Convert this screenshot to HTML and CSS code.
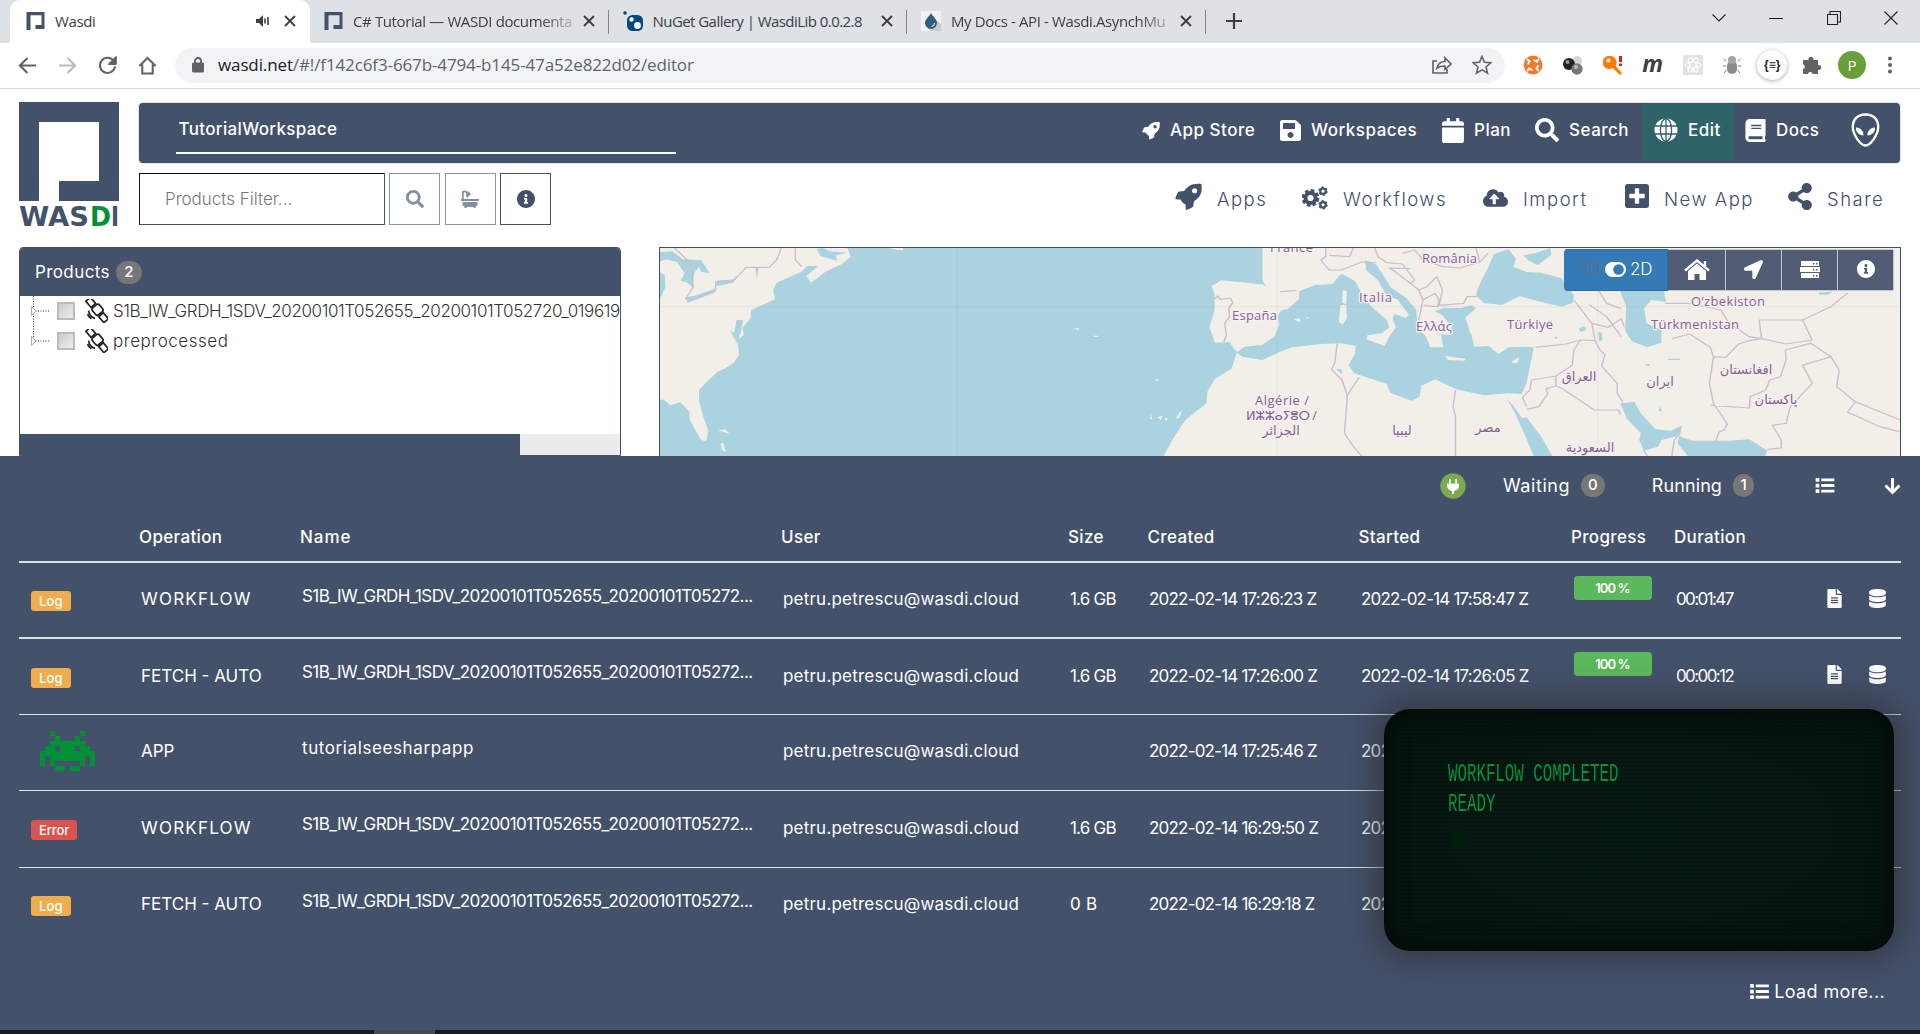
FILE: index.html
```html
<!DOCTYPE html>
<html lang="en">
<head>
<meta charset="utf-8">
<title>Wasdi</title>
<link rel="stylesheet" href="styles.css">
</head>
<body>
<svg class="defs" width="0" height="0">
  <defs>
    <symbol id="search" viewBox="0 0 512 512"><path d="M505 442.700L405.300 343c-4.500-4.500-10.600-7-17-7H372c27.600-35.300 44-79.700 44-128C416 93.100 322.900 0 208 0S0 93.100 0 208s93.100 208 208 208c48.300 0 92.700-16.400 128-44v16.300c0 6.400 2.500 12.500 7 17l99.700 99.700c9.400 9.400 24.600 9.400 33.900 0l28.300-28.300c9.400-9.400 9.400-24.600.1-34zM208 336c-70.700 0-128-57.200-128-128 0-70.700 57.200-128 128-128 70.700 0 128 57.200 128 128 0 70.700-57.200 128-128 128z"/></symbol>
    <symbol id="save" viewBox="0 32 448 448"><path d="M433.941 129.941l-83.882-83.882A48 48 0 0 0 316.118 32H48C21.490 32 0 53.490 0 80v352c0 26.510 21.490 48 48 48h352c26.510 0 48-21.490 48-48V163.882a48 48 0 0 0-14.059-33.941zM224 416c-35.346 0-64-28.654-64-64 0-35.346 28.654-64 64-64s64 28.654 64 64c0 35.346-28.654 64-64 64zm96-304.520V212c0 6.627-5.373 12-12 12H76c-6.627 0-12-5.373-12-12V108c0-6.627 5.373-12 12-12h228.520c3.183 0 6.235 1.264 8.485 3.515l3.480 3.480A11.996 11.996 0 0 1 320 111.480z"/></symbol>
    <symbol id="calendar" viewBox="0 0 448 512"><path d="M12 192h424c6.600 0 12 5.400 12 12v260c0 26.500-21.500 48-48 48H48c-26.500 0-48-21.500-48-48V204c0-6.600 5.400-12 12-12zm436-44v-36c0-26.500-21.500-48-48-48h-48V12c0-6.600-5.400-12-12-12h-40c-6.600 0-12 5.400-12 12v52H160V12c0-6.600-5.400-12-12-12h-40c-6.600 0-12 5.400-12 12v52H48C21.500 64 0 85.500 0 112v36c0 6.600 5.400 12 12 12h424c6.600 0 12-5.400 12-12z"/></symbol>
    <symbol id="book" viewBox="0 0 448 512"><path d="M448 360V24c0-13.300-10.700-24-24-24H96C43 0 0 43 0 96v320c0 53 43 96 96 96h328c13.300 0 24-10.700 24-24v-16c0-7.500-3.500-14.300-8.900-18.700-4.200-15.400-4.200-59.300 0-74.700 5.400-4.300 8.900-11.100 8.900-18.600zM128 134c0-3.300 2.700-6 6-6h212c3.300 0 6 2.700 6 6v20c0 3.300-2.700 6-6 6H134c-3.300 0-6-2.700-6-6v-20zm0 64c0-3.300 2.700-6 6-6h212c3.300 0 6 2.700 6 6v20c0 3.300-2.700 6-6 6H134c-3.300 0-6-2.700-6-6v-20zm253.400 250H96c-17.700 0-32-14.300-32-32 0-17.600 14.400-32 32-32h285.400c-1.900 17.100-1.900 46.900 0 64z"/></symbol>
    <symbol id="share" viewBox="0 0 448 512"><path d="M352 320c-22.608 0-43.387 7.819-59.790 20.895l-102.486-64.054a96.551 96.551 0 0 0 0-41.683l102.486-64.054C308.613 184.181 329.392 192 352 192c53.019 0 96-42.981 96-96S405.019 0 352 0s-96 42.981-96 96c0 7.158.79 14.130 2.276 20.841L155.790 180.895C139.387 167.819 118.608 160 96 160c-53.019 0-96 42.981-96 96s42.981 96 96 96c22.608 0 43.387-7.819 59.790-20.895l102.486 64.054A96.301 96.301 0 0 0 256 416c0 53.019 42.981 96 96 96s96-42.981 96-96-42.981-96-96-96z"/></symbol>
    <symbol id="plus" viewBox="0 32 448 448"><path d="M400 32H48C21.500 32 0 53.500 0 80v352c0 26.500 21.500 48 48 48h352c26.500 0 48-21.500 48-48V80c0-26.500-21.500-48-48-48zm-32 252c0 6.600-5.400 12-12 12h-92v92c0 6.600-5.400 12-12 12h-56c-6.600 0-12-5.400-12-12v-92H92c-6.600 0-12-5.400-12-12v-56c0-6.600 5.400-12 12-12h92v-92c0-6.600 5.400-12 12-12h56c6.600 0 12 5.400 12 12v92h92c6.600 0 12 5.400 12 12v56z"/></symbol>
    <symbol id="upload" viewBox="0 32 640 448"><path d="M537.600 226.600c4.100-10.700 6.400-22.400 6.400-34.600 0-53-43-96-96-96-19.700 0-38.100 6-53.300 16.200C367 64.200 315.300 32 256 32c-88.400 0-160 71.600-160 160 0 2.700.1 5.400.2 8.100C40.200 219.800 0 273.200 0 336c0 79.500 64.500 144 144 144h368c70.700 0 128-57.300 128-128 0-61.900-44-113.600-102.400-125.400zM393.400 288H328v112c0 8.800-7.200 16-16 16h-48c-8.800 0-16-7.200-16-16V288h-65.400c-14.300 0-21.400-17.200-11.300-27.300l105.400-105.400c6.200-6.200 16.400-6.200 22.600 0l105.400 105.400c10.100 10.100 2.900 27.300-11.300 27.300z"/></symbol>
    <symbol id="info" viewBox="8 8 496 496"><path d="M256 8C119.043 8 8 119.083 8 256c0 136.997 111.043 248 248 248s248-111.003 248-248C504 119.083 392.957 8 256 8zm0 110c23.196 0 42 18.804 42 42s-18.804 42-42 42-42-18.804-42-42 18.804-42 42-42zm56 254c0 6.627-5.373 12-12 12h-88c-6.627 0-12-5.373-12-12v-24c0-6.627 5.373-12 12-12h12v-64h-12c-6.627 0-12-5.373-12-12v-24c0-6.627 5.373-12 12-12h64c6.627 0 12 5.373 12 12v100h12c6.627 0 12 5.373 12 12v24z"/></symbol>
    <symbol id="arrow" viewBox="0 0 512 512"><path d="M444.520 3.520L28.740 195.420c-47.970 22.390-31.980 92.750 19.190 92.750h175.910v175.910c0 51.170 70.360 67.170 92.750 19.190l191.900-415.780c15.990-38.390-25.590-79.970-63.970-63.970z"/></symbol>
    <symbol id="database" viewBox="0 0 448 512"><path d="M448 73.143v45.714C448 159.143 347.667 192 224 192S0 159.143 0 118.857V73.143C0 32.857 100.333 0 224 0s224 32.857 224 73.143zM448 176v102.857C448 319.143 347.667 352 224 352S0 319.143 0 278.857V176c48.125 33.143 136.208 48.572 224 48.572S399.874 209.143 448 176zm0 160v102.857C448 479.143 347.667 512 224 512S0 479.143 0 438.857V336c48.125 33.143 136.208 48.572 224 48.572S399.874 369.143 448 336z"/></symbol>
    <symbol id="file" viewBox="0 0 384 512"><path d="M224 136V0H24C10.700 0 0 10.700 0 24v464c0 13.300 10.700 24 24 24h336c13.300 0 24-10.700 24-24V160H248c-13.200 0-24-10.800-24-24zm64 248H96v-32h192zm0-64H96v-32h192zm0-64H96v-32h192zM384 122v6H256V0h6c7 0 13 3 17 7l98 98c5 5 7 10 7 17z"/></symbol>
    <symbol id="rocket" viewBox="0 0 24 24"><path fill-rule="evenodd" d="M23.500.8C15 0 11.500 2.600 8.200 7L3.500 7.600C2.500 7.800.2 13.500.4 14.200c.2.500 4.700.5 4.700.5.300 1.700 2.500 4 4.400 4.500 0 0-.2 4.500.4 4.700.8.200 6-2 6.300-3.200l.7-4.500C22.500 12.500 24.500 9 23.500.8zM17.400 4.600a2.300 2.300 0 1 1 0 4.600 2.300 2.300 0 0 1 0-4.600z"/></symbol>
    <symbol id="globe" viewBox="0 0 24 24"><circle cx="12" cy="12" r="11.500"/><g class="cut"><ellipse cx="12" cy="12" rx="5.600" ry="11.500"/><path d="M12 .5v23M1 8h22M1 16h22"/></g></symbol>
    <symbol id="gears" viewBox="0 0 26 24"><g fill="none" stroke="currentColor"><circle cx="8.500" cy="12" r="5.100" stroke-width="4"/><circle cx="8.500" cy="12" r="7.600" stroke-width="2.600" stroke-dasharray="3.700 2.270"/><circle cx="21" cy="5.200" r="2.700" stroke-width="2.200"/><circle cx="21" cy="5.200" r="4" stroke-width="1.400" stroke-dasharray="2.200 2"/><circle cx="21" cy="18.800" r="2.700" stroke-width="2.200"/><circle cx="21" cy="18.800" r="4" stroke-width="1.400" stroke-dasharray="2.200 2"/></g></symbol>
    <symbol id="list" viewBox="0 0 20 16"><path d="M0 0h4v4H0zM0 6h4v4H0zM0 12h4v4H0zM6 .5h14v3H6zM6 6.500h14v3H6zM6 12.500h14v3H6z"/></symbol>
    <symbol id="mark" viewBox="0 0 18 18"><path fill="#44516b" d="M0 0h18v17h-9v-4h6V3.200H4V18H0z"/></symbol>
    <symbol id="x" viewBox="0 0 12 12"><path d="M1 1l10 10M11 1L1 11" fill="none" stroke="#3c4043" stroke-width="1.900"/></symbol>
    <symbol id="sat" viewBox="0 0 24 24"><g fill="#fff" stroke="#222" stroke-width="1.700" transform="rotate(50 12 12)"><rect x="-2" y="7.500" width="8" height="6"/><rect x="18" y="7.500" width="8" height="6"/><rect x="7.500" y="5.500" width="9" height="9" rx="2"/><path d="M6 10.500h1.500M16.500 10.500H18M7 17.500c3 2 7 2 10 0M9 20.500c2 1 4 1 6 0"/></g></symbol>
  </defs>
</svg>

<header class="browser">
  <div class="tabs">
    <div class="tab active"><svg class="fav"><use href="#mark"/></svg><span class="tab-title">Wasdi</span>
      <svg class="sound" width="14" height="12" viewBox="0 0 14 12"><path fill="#3c4043" d="M0 4h3l4-4v12L3 8H0z"/><path d="M9 3.500v5M12 2v8" stroke="#3c4043" stroke-width="1.600"/></svg>
      <svg class="close"><use href="#x"/></svg></div>
    <div class="tab"><svg class="fav"><use href="#mark"/></svg><span class="tab-title fade">C# Tutorial — WASDI documenta</span><svg class="close"><use href="#x"/></svg></div>
    <div class="tab"><svg class="fav" viewBox="0 0 20 20"><circle cx="2" cy="2" r="1.800" fill="#004880"/><rect x="4" y="4" width="16" height="16" rx="5.500" fill="#004880"/><circle cx="8.500" cy="8.500" r="2.200" fill="#fff"/><circle cx="14.500" cy="14.500" r="3.400" fill="#fff"/></svg><span class="tab-title nuget">NuGet Gallery | WasdiLib 0.0.2.8</span><svg class="close"><use href="#x"/></svg></div>
    <div class="tab"><svg class="fav" viewBox="0 0 20 20"><path fill="#f1f1f1" d="M0 0h20v20H0z"/><path fill="#c9c9c9" d="M15 9l5 4v7H10l-4-4z"/><path fill="#355a7d" d="M10 2c2 4 6 6 6 10a6 6 0 0 1-12 0c0-4 4-6 6-10z"/><path d="M13.500 12a3.500 3.500 0 0 1-3 3.500" fill="none" stroke="#fff"/></svg><span class="tab-title fade">My Docs - API - Wasdi.AsynchMu</span><svg class="close"><use href="#x"/></svg></div>
    <svg class="newtab" viewBox="0 0 16 16"><path d="M8 0v16M0 8h16" stroke="#3c4043" stroke-width="2.200"/></svg>
    <div class="winbtns">
      <svg viewBox="0 0 14 14"><path d="M.5 3.500L7 10l6.500-6.500"/></svg>
      <svg viewBox="0 0 14 14"><path d="M0 7.500h14"/></svg>
      <svg viewBox="0 0 14 14"><path d="M.5 3.500h10v10H.5zM3 3.500v-3h10.500v10.500h-3"/></svg>
      <svg viewBox="0 0 14 14"><path d="M.5.5l13 13M13.500.5l-13 13"/></svg>
    </div>
  </div>
  <div class="toolbar">
    <svg class="nav-ico" viewBox="0 0 20 20"><path d="M19 10H2M10 2l-8 8 8 8"/></svg>
    <svg class="nav-ico off" viewBox="0 0 20 20"><path d="M1 10h17M10 2l8 8-8 8"/></svg>
    <svg class="nav-ico" viewBox="0 0 20 20"><path d="M16.500 5A8 8 0 1 0 18 11M18.500 1v7h-7"/><path d="M18.500 2v6h-6z" fill="#5f6368"/></svg>
    <svg class="nav-ico" viewBox="0 0 20 20"><path d="M1.500 10.500L10 2l8.500 8.500M4.500 9v9.500h11V9"/></svg>
    <div class="omnibox">
      <svg width="12" height="16" viewBox="0 0 12 16"><rect y="5.500" width="12" height="10" rx="1.500" fill="#5f6368"/><path d="M3 6V4a3 3 0 0 1 6 0v2" fill="none" stroke="#5f6368" stroke-width="1.800"/></svg>
      <span class="url"><b>wasdi.net</b>/#!/f142c6f3-667b-4794-b145-47a52e822d02/editor</span>
      <svg class="share-ico" viewBox="0 0 20 20"><path d="M5 6H1v12h14v-4M5 13c1-4 3-6.500 8-6.500V3l6 6-6 5.500V11c-4 0-6 .5-8 2z"/></svg>
      <svg class="star-ico" viewBox="0 0 20 20"><path d="M10 1.500l2.500 5.800 6.300.5-4.800 4.200 1.500 6.200L10 14.900l-5.500 3.300L6 12 1.200 7.800l6.300-.5z"/></svg>
    </div>
    <div class="exts">
      <svg viewBox="0 0 20 20"><circle cx="10" cy="10" r="9.500" fill="#f47b2a"/><circle cx="10" cy="10" r="5" fill="none" stroke="#fff" stroke-width="1.800" stroke-dasharray="4.500 3.350"/><path d="M4 4l3 3M16 4l-3 3M4 16l3-3M16 16l-3-3" stroke="#fff" stroke-width="1.800"/></svg>
      <svg viewBox="0 0 20 20"><circle cx="14" cy="6" r="5" fill="#d6d6d6"/><circle cx="6" cy="9" r="6" fill="#222"/><circle cx="4.500" cy="7" r="2" fill="#999"/><circle cx="14" cy="14" r="5.700" fill="#777"/><circle cx="13" cy="12" r="2" fill="#bbb"/></svg>
      <svg viewBox="0 0 20 20"><path fill="#ff7a00" fill-rule="evenodd" d="M7 1a6.500 6.500 0 1 0 2.500 12L17 20l2-2-6.500-7A6.500 6.500 0 0 0 7 1zM5.500 3.500a2 2 0 1 1 0 4 2 2 0 0 1 0-4z"/><path fill="#d3202f" d="M16 1h3v6h-3zM16 8.500h3v2.500h-3z"/></svg>
      <span class="ext-m">m</span>
      <svg viewBox="0 0 20 20"><rect width="20" height="20" rx="1" fill="#e2e2e2"/><g fill="none" stroke="#fff"><ellipse cx="10" cy="10" rx="8" ry="3"/><ellipse cx="10" cy="10" rx="8" ry="3" transform="rotate(60 10 10)"/><ellipse cx="10" cy="10" rx="8" ry="3" transform="rotate(120 10 10)"/></g></svg>
      <svg viewBox="0 0 20 20"><path d="M4 6L1.500 4M4 11H1M4.500 15L2 18M16 6l2.500-2M16 11h3M15.500 15l2.500 3" stroke="#777" fill="none"/><rect x="5" y="6" width="10" height="13" rx="5" fill="#8a8a8a"/><circle cx="10" cy="5" r="4" fill="#a5a5a5"/></svg>
      <span class="ext-json">{≡}</span>
      <svg viewBox="0 0 20 20"><path fill="#5f6368" d="M1 5h5.500a2.500 2.500 0 1 1 4.800 0H16v5.200a2.500 2.500 0 1 1 0 4.800v4h-5.200a2.600 2.600 0 0 0-5 0H1v-4.700a2.600 2.600 0 0 0 0-5z"/></svg>
      <span class="avatar">P</span>
      <svg viewBox="0 0 20 20"><g fill="#5f6368"><circle cx="8" cy="3.500" r="2"/><circle cx="8" cy="10" r="2"/><circle cx="8" cy="16.500" r="2"/></g></svg>
    </div>
  </div>
</header>

<main class="page">
  <div class="top">
    <svg class="logo" viewBox="0 0 100 124">
      <path fill="#44516b" fill-rule="evenodd" d="M0 0h100v99H40V79h40V20H20v79H0z"/>
      <g class="word"><text x="0" y="123.500" textLength="70" lengthAdjust="spacingAndGlyphs" fill="#44516b">WAS</text><text x="71" y="123.500" textLength="21" lengthAdjust="spacingAndGlyphs" fill="#009036">D</text><text x="92" y="123.500" textLength="8" lengthAdjust="spacingAndGlyphs" fill="#44516b">I</text></g>
    </svg>
    <div class="heads">
      <div class="bar">
        <div class="workspace">TutorialWorkspace</div>
        <nav class="mainnav">
          <a><svg class="i18"><use href="#rocket"/></svg>App Store</a>
          <a><svg class="i21"><use href="#save"/></svg>Workspaces</a>
          <a><svg class="i22"><use href="#calendar"/></svg>Plan</a>
          <a><svg class="i24"><use href="#search"/></svg>Search</a>
          <a class="pad on"><svg class="i24"><use href="#globe"/></svg>Edit</a>
          <a class="pad"><svg class="i21"><use href="#book"/></svg>Docs</a>
          <a><svg width="29" height="34" viewBox="0 0 28 34"><path d="M14 1.500C6 1.500 1.300 6.500 1.300 14c0 7.500 7.700 18.500 12.700 18.500S26.700 21.500 26.700 14C26.700 6.500 22 1.500 14 1.500z" fill="none" stroke="#fff" stroke-width="2.400"/><path fill="#fff" d="M4.500 14.500c4-.5 8 3.500 7.500 8-4.500 0-8-4-7.500-8zM23.500 14.500c-4-.5-8 3.500-7.500 8 4.500 0 8-4 7.500-8z"/></svg></a>
        </nav>
      </div>
      <div class="tools">
        <div class="filter">Products Filter...</div>
        <span class="btn"><svg width="18" height="18"><use href="#search"/></svg></span>
        <span class="btn"><svg width="18" height="18" viewBox="0 0 18 18"><path d="M0 9h18v2H0zM1.500 12h15v3l-2 2v1h-2v-1h-7v1h-2v-1l-2-2zM1 9V2.500C1 0 5 0 6 2l1-1 3 3-4 4-1-3 .2-2c-.7-1-2.500-1-2.500.5V9z"/></svg></span>
        <span class="btn strong"><svg width="18" height="18"><use href="#info"/></svg></span>
        <nav class="subnav">
          <a><svg width="27" height="27"><use href="#rocket"/></svg>Apps</a>
          <a><svg class="gears" width="26" height="24"><use href="#gears"/></svg>Workflows</a>
          <a><svg class="cloud" width="25" height="18"><use href="#upload"/></svg>Import</a>
          <a><svg width="24" height="24"><use href="#plus"/></svg>New App</a>
          <a><svg width="24" height="27"><use href="#share"/></svg>Share</a>
        </nav>
      </div>
    </div>
  </div>

  <div class="work">
    <section class="products">
      <div class="phead">Products<span class="badge">2</span></div>
      <div class="tree">
        <div class="node"><svg class="branch" viewBox="0 0 20 30"><path class="dots" d="M2.500 0v30M2 15h17"/><path class="tri" d="M.5 10.500L5 15 .5 19.500z"/></svg><i class="chk"></i><svg class="sat"><use href="#sat"/></svg><span class="long">S1B_IW_GRDH_1SDV_20200101T052655_20200101T052720_019619</span></div>
        <div class="node"><svg class="branch" viewBox="0 0 20 30"><path class="dots" d="M2.500 0v15M2 15h17"/><path class="tri" d="M.5 10.500L5 15 .5 19.500z"/></svg><i class="chk"></i><svg class="sat"><use href="#sat"/></svg><span class="pre">preprocessed</span></div>
      </div>
      <div class="scroll"><div class="thumb"></div></div>
    </section>
    <section class="map">
      <svg class="geo" viewBox="660 248 1240 208" preserveAspectRatio="none">
        <g transform="translate(650 240) scale(.40816 .33333)">
          <g class="land">
            <path d="M22 0H490L483 22 492 50 470 72 430 95 395 128 383 108 412 78 385 78 371 95 335 115 310 128 302 150 306 178 285 190 248 210 246 235 226 265 230 285 214 300 218 345 205 368 185 385 165 395 140 425 120 450 120 482 130 528 143 572 138 604 125 600 107 562 97 538 96 515 75 487 50 496 35 480 22 478z"/>
            <path d="M1568 165L1640 130 1700 100 1568 0H1500L1522 60 1518 110 1505 134 1460 128 1400 121 1376 138 1384 165 1383 210 1371 262 1384 308 1420 306 1430 325 1440 336 1455 320 1500 315 1530 290 1541 255 1538 225 1555 195z"/>
            <path d="M585 24h35v6h-12zM172 612l8-4 6 28-8-4zM165 572l20-4 10 14-20-8zM1226 520l5 18h-5zM1244 532l12-6-4 14zM1260 534l8 0-2 10zM1288 535l12-22 4-2-8 24zM1036 266l14-2 2 6zM1086 287h12v4h-10zM1238 418h8v4h-8z"/>
          </g>
          <g class="sea">
            <path d="M22 36L55 34 80 58 125 60 147 100 125 95 120 80 108 100 105 142 92 128 75 122 85 100 66 66 40 58 22 66zM22 96L36 104 38 140 22 184zM86 172L108 168 160 146 158 158 110 180 92 188zM160 134L168 122 205 118 213 100 204 128 166 138zM258 82h8l-4 36zM408 26L418 48 458 62 455 46 484 38 440 34 425 24zM228 240l-6 40-10 30-8-40 6 35-14-35 10 10 6-40z"/>
          </g>
          <path class="border" d="M60 24L100 70 106 140 88 176 105 180 160 152 162 124 205 122 236 82H292L310 60 322 24M356 24V60L372 80M1384 176L1392 168 1397 178 1422 174 1428 188 1418 205 1420 230 1408 250 1412 285 1406 306M1505 134L1540 152 1556 150 1570 165M1501 360L1512 400 1518 428 1500 436 1478 448 1472 466 1440 490 1386 516V588H1330V648M1386 552L1340 564 1330 586 1295 635V648M1386 552L1498 648M1425 648V610H1450"/>
          <g transform="translate(1543.500 0)">
            <g class="land">
              <path d="M-43 0H1530V650H-286L-260 592-232 540-180 490-178 455-160 418-118 385-106 338-92 350-43 360 0 335 30 322 100 312 150 310 186 318 184 340 168 375 182 400 262 432 270 458 322 482 342 470 346 438 380 418 432 448 500 466 560 460 592 462 604 430 622 322 600 320 560 322 535 342 512 318 476 320 468 280 450 262 452 235 480 205 470 196 440 205 400 212 398 225 420 262 418 285 394 282 400 322 368 322 358 290 338 262 334 210 310 175 270 140 250 100 236 74 208 60 212 92 238 118 262 168 288 178 316 225 308 234 280 222 276 236 284 262 270 285 256 318 212 298 214 286 250 280 268 262 262 240 224 200 202 164 184 124 150 100 128 132 105 134 62 136 48 140 46 178 20 206 0 212-43 120z"/>
              <path d="M148 196l14-2 2 40-10 20-10-8zM154 150l10 4-2 38-10-4zM404 348l50 8-2 6-40-2zM570 362l16-10-4 16-14 2zM35 238l12-4 4 8-6 4zM62 232h8v6z"/>
            </g>
            <g class="sea">
              <path d="M480 165L490 130 508 88 524 42 560 28 578 56 572 80 604 96 640 98 690 115 720 165 718 188 690 200 640 186 588 168 545 194 500 190zM596 46L625 40 662 24 665 44 632 76 610 62zM826 130L940 152 946 185 910 180 892 205 898 250 935 270 934 308 900 322 862 304 846 272 848 200zM556 476L574 500 592 534 604 532 640 590 668 650H622L598 580 576 520zM834 490L868 486 884 520 920 568 958 572 985 556 980 586 935 600 926 620 892 632 880 600 884 580 850 536zM978 588L1010 602 1100 602 1150 598 1194 632 1188 650H1000L974 610z"/>
              <path d="M380 214l20-10 70 0-16 28 8 30 8 50-20-12-10-50-26-24-16 0zM732 266l14-8 4 12-14 6zM780 276l8 2 2 22-8 4zM896 372h10v6h-10zM950 356h30v4h-30zM930 498l6 16h-8zM1320 158l34-4-10 10h-22zM136 388h16v14zM672 290h8l-4 8z"/>
            </g>
            <path class="border" d="M0 155L40 152M112 24V50L100 60 120 90 150 90 200 66 236 68M232 24L240 50 262 68 300 72 330 120 320 130 276 90 268 84 320 86M300 40L330 30 350 60 400 80 440 84 490 66 510 40M320 130L340 150 350 180 340 240M350 180L380 160 390 180 386 200 352 196M384 110L398 150 390 196 450 190 458 170 486 170M384 110L360 140 340 150M180 24L170 50 120 46M490 66L480 24M140 312L134 370 126 388 152 420 165 466 158 580 180 620 200 648M165 466L194 412M430 450L424 500 430 530V648M626 322L700 312 736 300 772 302M736 300L720 330 716 376 676 408 616 420 612 450 594 472 604 500M676 408V438L652 446 656 462 634 500 604 508M676 438L692 446 770 510H830L834 524M772 302L784 330 796 344 788 378 826 430 826 460 840 486M772 302L764 250 720 180M764 250L804 262 836 236 844 262M758 194L800 230 836 290M780 150L800 190 836 206M960 296L1004 282 1054 322 1062 350 1052 430 1062 490 1096 552 1088 570 1076 576 1066 606M1062 350L1092 352 1124 312 1150 302 1180 296 1240 312 1304 300M1056 496L1150 504 1152 470 1190 450 1200 420 1226 410 1240 360 1238 330 1300 310 1350 350 1280 376 1304 430 1250 500 1240 550 1206 556 1228 600V624L1194 628M1350 350L1370 390 1364 440 1410 486 1440 500 1520 540M1410 486L1390 516 1470 560 1520 576M1304 300L1280 240 1350 200 1392 158M1180 296L1174 240 1280 240M1080 210L1100 250 1150 290 1180 296M960 648L966 600 976 586M900 648L890 630M944 190L1000 190 1080 210"/>
          </g>
          <path class="grid" d="M22 200H3060M753 24V648M1537 24V648M2322 24V648"/>
        </g>
        <g class="labels">
          <text x="1270" y="252" textLength="43">France</text>
          <text x="1232" y="320" textLength="45">España</text>
          <text x="1422" y="263" textLength="55">România</text>
          <text x="1359" y="302" textLength="33">Italia</text>
          <text x="1416" y="331" textLength="36">Ελλάς</text>
          <text x="1507" y="329" textLength="46">Türkiye</text>
          <text x="1691" y="306" textLength="74">O‘zbekiston</text>
          <text x="1651" y="329" textLength="88">Türkmenistan</text>
          <text x="1255" y="405" textLength="54">Algérie /</text>
          <text x="1246" y="420" textLength="71">ⵍⵣⵣⴰⵢⴻⵔ /</text>
          <text x="1281" y="435" class="c">الجزائر</text>
          <text x="1402" y="435" class="c">ليبيا</text>
          <text x="1488" y="432" class="c">مصر</text>
          <text x="1590" y="452" class="c">السعودية</text>
          <text x="1579" y="381" class="c">العراق</text>
          <text x="1660" y="386" class="c">ایران</text>
          <text x="1746" y="374" class="c">افغانستان</text>
          <text x="1776" y="404" class="c">پاکستان</text>
        </g>
      </svg>
      <div class="mapbtns">
        <span class="mode"><em>3D</em><svg width="21" height="15" viewBox="0 0 21 15"><rect width="21" height="15" rx="7.500" fill="#fff"/><circle cx="13.500" cy="7.500" r="5.300" fill="#337ab7"/></svg>2D</span>
        <span class="w58"><svg width="26" height="21" viewBox="0 0 26 21"><path d="M13 4.500l9 7.500v9h-6.500v-6h-5v6H4v-9z"/><path d="M1 11.500L13 1.500l12 10M21 2v5" fill="none" stroke="#fff" stroke-width="2.400"/></svg></span>
        <span class="w56"><svg width="19" height="19"><use href="#arrow"/></svg></span>
        <span class="w56"><svg width="20" height="17" viewBox="0 0 20 17"><path fill-rule="evenodd" d="M1 0h18v5H1zM0 6h20v5H0zM1 12h18v5H1zM13 2h1.500v1.500H13zM16 2h1.500v1.500H16zM13 8h1.500v1.500H13zM16 8h1.500v1.500H16zM13 14h1.500v1.500H13zM16 14h1.500v1.500H16z"/></svg></span>
        <span class="w56"><svg width="18" height="18"><use href="#info"/></svg></span>
      </div>
    </section>
  </div>
</main>

<section class="procs">
  <div class="status">
    <svg width="26" height="26" viewBox="0 0 26 26"><circle cx="13" cy="13" r="12.700" fill="#7bab4f"/><path fill="#fff" d="M9 6h1.800v4H9zM15.200 6H17v4h-1.800zM7 10.500h12v2c0 3-2 5-5 5.400V21h-2v-3.100c-3-.4-5-2.400-5-5.400z"/></svg>
    <span class="waiting">Waiting</span><span class="badge b26">0</span>
    <span class="running">Running</span><span class="badge b23">1</span>
    <svg class="listico" width="20" height="15"><use href="#list"/></svg>
    <svg width="17" height="17" viewBox="0 0 17 17"><path d="M8.500 0v14M1.500 7.500l7 7 7-7" fill="none" stroke="#fff" stroke-width="2.900"/></svg>
  </div>
  <div class="row hdr"><span></span><span>Operation</span><span class="nm">Name</span><span>User</span><span>Size</span><span>Created</span><span>Started</span><span>Progress</span><span>Duration</span></div>
  <div class="row thick"><span><b class="tag">Log</b></span><span class="op wf">WORKFLOW</span><span class="name">S1B_IW_GRDH_1SDV_20200101T052655_20200101T05272...</span><span class="user">petru.petrescu@wasdi.cloud</span><span class="num">1.6 GB</span><span class="num">2022-02-14 17:26:23 Z</span><span class="num">2022-02-14 17:58:47 Z</span><span class="prog"><b>100 %</b></span><span class="dur">00:01:47</span><span class="acts"><svg width="15" height="19"><use href="#file"/></svg><svg width="17" height="19"><use href="#database"/></svg></span></div>
  <div class="row thick"><span><b class="tag">Log</b></span><span class="op">FETCH - AUTO</span><span class="name">S1B_IW_GRDH_1SDV_20200101T052655_20200101T05272...</span><span class="user">petru.petrescu@wasdi.cloud</span><span class="num">1.6 GB</span><span class="num">2022-02-14 17:26:00 Z</span><span class="num">2022-02-14 17:26:05 Z</span><span class="prog"><b>100 %</b></span><span class="dur">00:00:12</span><span class="acts"><svg width="15" height="19"><use href="#file"/></svg><svg width="17" height="19"><use href="#database"/></svg></span></div>
  <div class="row"><span><svg class="invader" viewBox="0 0 11 8" preserveAspectRatio="none" shape-rendering="crispEdges"><path fill="#009036" fill-rule="evenodd" d="M2 0h1v1H2zM8 0h1v1H8zM3 1h1v1H3zM7 1h1v1H7zM2 2h7v1h1v1h1v3h-1V5H9v2H8V6H3v1H2V5H1v2H0V4h1V3h1zM3 3v1h1V3zM7 3v1h1V3zM3 7h2v1H3zM6 7h2v1H6z"/></svg></span><span class="op">APP</span><span class="name app">tutorialseesharpapp</span><span class="user">petru.petrescu@wasdi.cloud</span><span></span><span class="num">2022-02-14 17:25:46 Z</span><span class="num under">2022</span></div>
  <div class="row"><span><b class="tag err">Error</b></span><span class="op wf">WORKFLOW</span><span class="name">S1B_IW_GRDH_1SDV_20200101T052655_20200101T05272...</span><span class="user">petru.petrescu@wasdi.cloud</span><span class="num">1.6 GB</span><span class="num">2022-02-14 16:29:50 Z</span><span class="num under">2022</span></div>
  <div class="row"><span><b class="tag">Log</b></span><span class="op">FETCH - AUTO</span><span class="name">S1B_IW_GRDH_1SDV_20200101T052655_20200101T05272...</span><span class="user">petru.petrescu@wasdi.cloud</span><span class="num zero">0 B</span><span class="num">2022-02-14 16:29:18 Z</span><span class="num under">2022</span></div>
  <div class="more"><svg width="19" height="15"><use href="#list"/></svg>Load more...</div>
</section>
<footer class="taskbar"><i></i></footer>

<aside class="terminal">
  <div class="line">WORKFLOW COMPLETED</div>
  <div class="line">READY</div>
  <div class="cursor"></div>
</aside>
</body>
</html>
```
FILE: styles.css
```css
* { box-sizing: border-box; }
body { margin: 0; width: 1920px; height: 1034px; overflow: hidden; background: #fff; display: flex; flex-direction: column; font: 400 17px/20px Inter, "Liberation Sans", sans-serif; color: #fff; position: relative; }
svg { flex: none; fill: currentColor; display: block; }
.defs { position: absolute; }

/* browser chrome */
.browser { height: 89px; border-bottom: 1px solid #d9dadc; font-family: "Open Sans", "Noto Sans", sans-serif; color: #3c4043; }
.tabs { height: 43px; background: #dee1e6; display: flex; align-items: flex-start; padding-left: 10px; }
.tab { width: 298.5px; height: 43px; display: flex; align-items: center; padding: 0 14px 2px 14px; font-size: 15px; letter-spacing: -.38px; position: relative; }
.tab.active { background: #fff; width: 300px; border-radius: 10px 10px 0 0; padding-left: 16px; }
.tab:not(.active)::after { content: ""; position: absolute; right: 0; top: 10px; height: 24px; width: 1px; background: #84878b; }
.fav { width: 19px; height: 18px; margin-right: 10px; }
.tab:nth-child(n+3) .fav { width: 20px; height: 20px; }
.tab-title { flex: 1; white-space: nowrap; overflow: hidden; }
.tab-title.nuget { letter-spacing: -.55px; }
.fade { flex: none; width: 221px; margin-right: auto; -webkit-mask-image: linear-gradient(90deg, #000 85%, rgba(0,0,0,.2)); mask-image: linear-gradient(90deg, #000 85%, rgba(0,0,0,.2)); }
.sound { margin-right: 14px; }
.close { width: 12px; height: 12px; }
.newtab { width: 16px; height: 16px; margin: 13px 0 0 20px; }
.winbtns { margin: 11px 22px 0 auto; display: flex; gap: 43.500px; }
.winbtns svg { width: 14px; height: 14px; fill: none; stroke: #222; stroke-width: 1.100; }
.toolbar { height: 44px; display: flex; align-items: center; padding: 0 18px 0 18px; }
.nav-ico { width: 19px; height: 19px; margin-right: 21px; fill: none; stroke: #5f6368; stroke-width: 2.200; }
.nav-ico.off { stroke: #babcbe; }
.omnibox { width: 1330px; height: 35px; border-radius: 18px; background: #f1f3f4; margin-left: -3px; padding: 0 13px 0 17px; display: flex; align-items: center; }
.url { margin-left: 14px; font-size: 17px; letter-spacing: -.12px; color: #5f6368; flex: 1; }
.url b { font-weight: 400; color: #202124; }
.share-ico, .star-ico { width: 20px; height: 20px; fill: none; stroke: #5f6368; stroke-width: 1.600; }
.star-ico { margin-left: 20px; }
.exts { flex: 1; display: flex; justify-content: space-between; align-items: center; padding-left: 18px; }
.exts svg { width: 20px; height: 20px; }
.exts span { width: 20px; display: flex; align-items: center; justify-content: center; }
.exts .ext-m { font: italic 700 23px/20px "Open Sans", sans-serif; padding-bottom: 4px; }
.exts .ext-json { width: 30px; height: 30px; margin: 0 -5px; border-radius: 50%; font: 700 12px/30px "Liberation Sans", sans-serif; color: #222; box-shadow: 0 1px 4px rgba(0,0,0,.35); }
.exts .avatar { width: 28px; height: 28px; margin: 0 -4px; border-radius: 50%; background: #689f38; color: #fff; font-size: 15px; }

/* page head */
.page { height: 367px; padding: 13px 19px 0; color: #44516b; }
.top { height: 124px; display: flex; gap: 20px; }
.logo { width: 100px; height: 124px; overflow: visible; }
.word { font: 700 26px "DejaVu Sans", sans-serif; }
.heads { flex: 1; padding-top: 1px; }
.bar { height: 60px; background: #44516b; border-radius: 4px; color: #fff; display: flex; justify-content: space-between; font-weight: 500; box-shadow: 0 0 0 1px #e3e6e6; margin-right: 1px; }
.workspace { width: 500px; height: 51px; margin-left: 37px; border-bottom: 2px solid #fff; padding: 16px 0 0 2.500px; letter-spacing: .34px; }
.mainnav { display: grid; grid-template-columns: 138px 162px 93px 107px 91px 118px 49px; height: 57px; letter-spacing: .5px; }
.mainnav a { display: flex; align-items: center; gap: 10px; white-space: nowrap; padding-bottom: 3px; }
.mainnav a.pad { padding-left: 12px; }
.mainnav a.on { background: #2e6368; }
.i18 { width: 18px; height: 19px; } .i21 { width: 21px; height: 23px; } .i22 { width: 22px; height: 25px; } .i24 { width: 24px; height: 24px; }
.cut { fill: none; stroke: #2e6368; stroke-width: 1.300; }
.tools { height: 52px; margin-top: 10px; display: flex; align-items: center; color: #44516b; }
.filter { width: 246px; height: 52px; border: 1px solid #1c2433; border-color: #111 #44516b #44516b #111; padding: 15px 25px; color: #777; font-weight: 300; }
.btn { width: 51px; height: 52px; margin-left: 4px; border: 1px solid #8c94a6; color: #858da0; display: flex; align-items: center; justify-content: center; }
.btn + .btn { margin-left: 4.500px; }
.btn.strong { border-color: #44516b; color: #44516b; }
.subnav { margin-left: auto; margin-right: 1px; display: grid; grid-template-columns: 127px 181px 142px 163px 112px; font-size: 18.500px; font-weight: 300; letter-spacing: 1.500px; }
.subnav a { display: flex; align-items: center; gap: 15px; white-space: nowrap; height: 30px; }
.subnav svg { margin-bottom: 6px; }
.subnav .gears, .subnav .cloud { margin-bottom: 2px; }

/* products and map */
.work { display: flex; gap: 38px; margin-top: 21px; }
.products { width: 602px; height: 209px; border: 1px solid #44516b; border-radius: 4px 4px 0 0; display: flex; flex-direction: column; overflow: hidden; }
.phead { height: 48px; background: #44516b; color: #fff; display: flex; align-items: center; gap: 6px; padding-left: 15px; letter-spacing: .4px; flex: none; }
.badge { background: #777; border-radius: 12px; color: #fff; width: 26px; height: 23px; font-size: 15px; font-weight: 500; letter-spacing: 0; display: flex; align-items: center; justify-content: center; }
.tree { flex: 1; color: #333; font-weight: 300; }
.node { height: 30px; display: flex; align-items: center; white-space: nowrap; padding-left: 11px; overflow: hidden; }
.branch { width: 20px; height: 30px; }
.dots { fill: none; stroke: #333; stroke-width: 1; stroke-dasharray: 1 1.500; }
.tri { fill: #fff; stroke: #aaa; }
.chk { width: 18px; height: 18px; margin: 0 9px 0 6px; border: 2px solid #bbb; background: linear-gradient(135deg, #ccc, #eee); }
.sat { width: 24px; height: 24px; margin-right: 5px; }
.long { letter-spacing: -.41px; } .pre { letter-spacing: .54px; }
.scroll { height: 21px; background: #ececec; }
.thumb { width: 500px; height: 21px; background: #44516b; }
.map { width: 1242px; height: 209px; border: 1px solid #44516b; border-bottom: 0; position: relative; background: #aad3df; }
.geo { width: 1240px; height: 208px; }
.land { fill: #f2efe9; }
.sea { fill: #aad3df; }
.border { fill: none; stroke: #cfbccd; stroke-width: 3.600; stroke-linejoin: round; }
.grid { fill: none; stroke: rgba(150,160,170,.18); stroke-width: 2; }
.labels { font: 500 13px "Open Sans", "Noto Sans", "DejaVu Sans", sans-serif; fill: #856489; stroke: #f6eff5; stroke-width: 2.500; paint-order: stroke; stroke-linejoin: round; }
.c { text-anchor: middle; }
.mapbtns { position: absolute; right: 6px; top: 1px; height: 42px; display: flex; border-radius: 4px; overflow: hidden; color: #fff; }
.mapbtns span { display: flex; align-items: center; justify-content: center; background: rgba(68,81,107,.93); border: 1px solid #c3cad3; border-left: 0; padding-bottom: 2px; }
.mapbtns .mode { width: 104px; background: #337ab7; gap: 4px; font-weight: 300; border-color: #2e6da4; }
.mode em { font-style: normal; color: #62707f; }
.mapbtns .w58 { width: 58px; } .mapbtns .w56 { width: 56px; }

/* process list */
.procs { height: 574px; background: #44516b; padding: 0 19px; }
.status { height: 60px; display: flex; align-items: center; padding-left: 1421px; font-size: 18px; }
.waiting { width: 68px; margin-left: 37px; letter-spacing: .55px; } .running { width: 71px; margin-left: 47px; letter-spacing: .1px; }
.status .badge { margin: 0 0 2px 11px; }
.status .b23 { width: 23px; }
.listico { margin: 0 49px 2px 61px; }
.row { height: 76.400px; border-top: 1px solid #dfe2e0; display: grid; grid-template-columns: 122px 161px 481px 287px 79px 212px 212.500px 102.500px 151px 1fr; align-items: center; white-space: nowrap; width: 1882px; padding-bottom: 2px; }
.row.thick { border-top-width: 2px; }
.row.hdr { border: 0; height: 45px; grid-template-columns: 120px 161px 481px 287px 79.500px 211px 212.500px 103px 100px; font-weight: 500; letter-spacing: .35px; padding-bottom: 3px; }
.hdr .nm { letter-spacing: 1px; }
.tag { display: inline-block; margin: 4px 0 0 12px; background: #f0ad4e; border-radius: 3px; padding: 0 8px; height: 20px; font: 500 13px/20px Inter, sans-serif; letter-spacing: .2px; }
.tag.err { background: #d9534f; letter-spacing: -.1px; }
.op.wf { letter-spacing: 1.200px; }
.name { letter-spacing: -.59px; margin-top: -7px; }
.name.app { letter-spacing: .6px; }
.user { letter-spacing: .21px; }
.num { letter-spacing: -.8px; } .zero { letter-spacing: .2px; }
.under { width: 30px; }
.prog b { display: block; width: 78px; height: 24px; margin: -23px 0 0 0; border-radius: 4px; background: #5cb85c; text-align: center; font: 600 13px/25px Inter, sans-serif; letter-spacing: -.9px; }
.dur { letter-spacing: -1.600px; }
.acts { display: flex; gap: 27px; margin-top: -2px; }
.invader { width: 55px; height: 40px; margin: 0 0 0 21px; }
.more { display: flex; justify-content: flex-end; align-items: center; gap: 5px; font-size: 18px; letter-spacing: .36px; margin: 39px 16px 0 0; }
.taskbar { height: 4px; background: #1c1c1c; padding-left: 374px; }
.taskbar i { display: block; width: 61px; height: 4px; background: #4a4a4a; }

/* overlay console */
.terminal { position: absolute; left: 1384px; top: 709px; width: 510px; height: 242px; border-radius: 26px; padding: 49.500px 0 0 64px; color: #00923c; background: repeating-linear-gradient(0deg, rgba(0,0,0,.12) 0 2px, transparent 2px 4px), radial-gradient(ellipse at center, #071a12, #03140f); box-shadow: 0 0 34px 5px rgba(45,45,45,.8), inset 0 0 18px 6px rgba(5,10,8,.9); }
.line { width: 290px; font: 400 26px/30px "Liberation Mono", monospace; transform: scaleX(.607); transform-origin: 0 0; white-space: nowrap; }
.cursor { width: 15px; height: 19px; margin: 10px 0 0 3px; background: #021a0e; }
```
